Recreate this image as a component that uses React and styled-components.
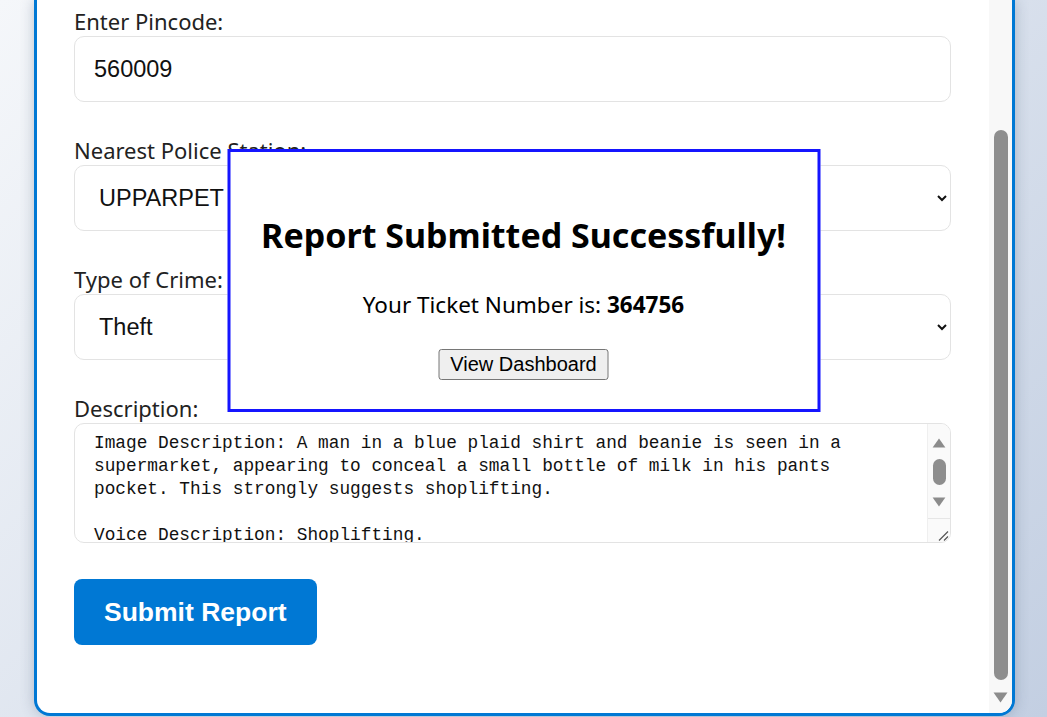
import styled, { createGlobalStyle } from "styled-components";

const GlobalStyle = createGlobalStyle`
  body {
    margin: 0;
    background: linear-gradient(135deg, #f5f7fa 0%, #c3cfe2 100%);
    font-family: "Noto Sans", "Open Sans", sans-serif;
    overflow: hidden;
  }

  * {
    box-sizing: border-box;
  }
`;

const description = `Image Description: A man in a blue plaid shirt and beanie is seen in a supermarket, appearing to conceal a small bottle of milk in his pants pocket. This strongly suggests shoplifting.

Voice Description: Shoplifting.`;

const Arrow = ({ up, size = 15, h = 11 }) => (
  <svg width={size} height={h} viewBox="0 0 15 11">
    <path
      d={up ? "M7.5 0.5 L14.5 10.5 L0.5 10.5 Z" : "M0.5 0.5 L14.5 0.5 L7.5 10.5 Z"}
      fill="#8c8c8c"
    />
  </svg>
);

const App = () => {
  return (
    <>
      <GlobalStyle />
      <Page>
        <Card>
          <Content>
            <Field>
              <Label>Enter Pincode:</Label>
              <Input type="text" defaultValue="560009" />
            </Field>

            <Field>
              <Label>Nearest Police Station:</Label>
              <Select defaultValue="UPPARPET">
                <option>UPPARPET</option>
              </Select>
            </Field>

            <Field>
              <Label>Type of Crime:</Label>
              <Select defaultValue="Theft">
                <option>Theft</option>
              </Select>
            </Field>

            <Field $last>
              <Label>Description:</Label>
              <DescBox>
                <TextArea defaultValue={description} />
                <TextRail>
                  <Arrow up size={14} h={10} />
                  <TextThumb />
                  <Arrow size={14} h={10} />
                  <Resizer>
                    <svg width="12" height="10" viewBox="0 0 12 10">
                      <path d="M2 9.5 L11 0.5 M7 9.5 L11 5.5" stroke="#555" strokeWidth="1.2" />
                    </svg>
                  </Resizer>
                </TextRail>
              </DescBox>
            </Field>

            <SubmitButton>Submit Report</SubmitButton>
          </Content>

          <Rail>
            <Thumb $top={130} $height={550} />
            <RailButton>
              <Arrow />
            </RailButton>
          </Rail>
        </Card>
      </Page>

      <Modal>
        <ModalTitle>Report Submitted Successfully!</ModalTitle>
        <Ticket>
          Your Ticket Number is: <strong>364756</strong>
        </Ticket>
        <DashboardButton>View Dashboard</DashboardButton>
      </Modal>
    </>
  );
};

const Page = styled.div`
  height: 100vh;
  padding: 0 32px 1px 34px;
`;

const Card = styled.div`
  display: flex;
  height: 100%;
  background: #fff;
  border: 3px solid #0078d4;
  border-top: none;
  border-radius: 0 0 16px 16px;
  box-shadow: 0 0 14px rgba(60, 80, 110, 0.3);
  overflow: hidden;
`;

const Content = styled.div`
  flex: 1;
  padding: 6px 38px 0 37px;
`;

const Rail = styled.div`
  width: 23px;
  display: flex;
  flex-direction: column;
  align-items: center;
  background: #f8f8f8;
`;

const Thumb = styled.div`
  margin-top: ${(p) => p.$top}px;
  width: 14px;
  height: ${(p) => p.$height}px;
  border-radius: 7px;
  background: #8e8e8e;
`;

const RailButton = styled.div`
  margin-top: 12px;
  height: 11px;
  display: flex;
`;

const Field = styled.div`
  display: flex;
  flex-direction: column;
  margin-bottom: ${(p) => (p.$last ? 36 : 33)}px;
`;

const Label = styled.label`
  font-size: 22px;
  line-height: 30px;
  color: #222;
`;

const Input = styled.input`
  height: 66px;
  width: 100%;
  padding: 0 19px;
  border: 1px solid #e3e3e3;
  border-radius: 10px;
  background: #fff;
  font-family: "Liberation Sans", Arial, sans-serif;
  font-size: 23.5px;
  color: #111;
  outline: none;
`;

const Select = styled.select`
  height: 66px;
  width: 100%;
  padding: 0 19px 0 20px;
  border: 1px solid #e3e3e3;
  border-radius: 10px;
  background: #fff;
  font-family: "Liberation Sans", Arial, sans-serif;
  font-size: 23.5px;
  color: #111;
  outline: none;
`;

const DescBox = styled.div`
  display: flex;
  height: 120px;
  border: 1px solid #e3e3e3;
  border-radius: 10px;
  overflow: hidden;
  background: #fff;
`;

const TextArea = styled.textarea`
  flex: 1;
  min-width: 0;
  height: 100%;
  padding: 8px 20px 0 19px;
  border: none;
  font-family: "Liberation Mono", "DejaVu Sans Mono", monospace;
  font-size: 17.8px;
  line-height: 23px;
  color: #111;
  background: transparent;
  outline: none;
  resize: none;
  overflow: hidden;
`;

const TextRail = styled.div`
  width: 23px;
  display: flex;
  flex-direction: column;
  align-items: center;
  padding-top: 14px;
  background: #fafafa;
  border-left: 1px solid #efefef;

  svg {
    flex-shrink: 0;
  }
`;

const TextThumb = styled.div`
  width: 13px;
  height: 26px;
  margin: 11px 0 12px;
  border-radius: 7px;
  background: #8e8e8e;
`;

const Resizer = styled.div`
  margin-top: 11px;
  width: 100%;
  flex: 1;
  display: flex;
  align-items: flex-end;
  justify-content: flex-end;
  padding: 0 1px 1px 0;
  border-top: 1px solid #e6e6e6;
`;

const SubmitButton = styled.button`
  display: block;
  height: 66px;
  padding: 0 30px;
  border: none;
  border-radius: 8px;
  background: #0078d4;
  color: #fff;
  font-family: "Liberation Sans", Arial, sans-serif;
  font-size: 26.5px;
  font-weight: 700;
  cursor: pointer;
`;

const Modal = styled.div`
  position: fixed;
  top: 149px;
  left: 50%;
  transform: translateX(-50%);
  width: 593px;
  padding: 62px 20px 29px;
  background: #fff;
  border: 3px solid #1515ff;
  text-align: center;
  color: #000;
`;

const ModalTitle = styled.h2`
  margin: 0 0 33px;
  font-size: 34px;
  line-height: 43px;
  font-weight: 700;
`;

const Ticket = styled.p`
  margin: 0 0 29px;
  font-size: 22.5px;
  line-height: 30px;
`;

const DashboardButton = styled.button`
  height: 31px;
  padding: 0 11px;
  border: 1px solid #767676;
  border-radius: 3px;
  background: #efefef;
  font-family: "Liberation Sans", Arial, sans-serif;
  font-size: 20px;
  color: #000;
`;

export default App;
